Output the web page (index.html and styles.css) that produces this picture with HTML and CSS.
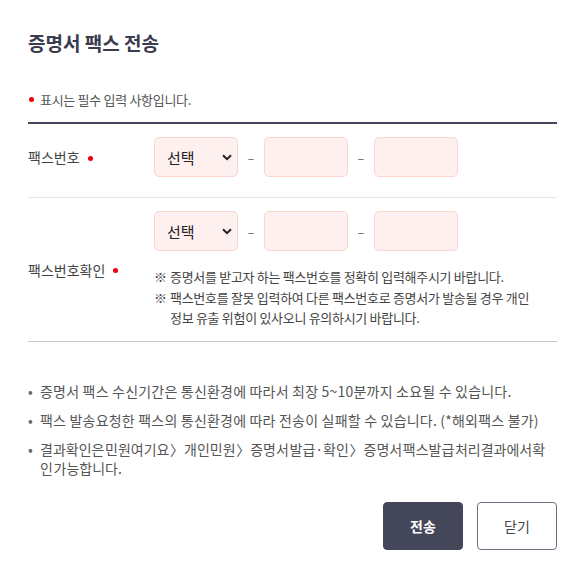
FILE: index.html
```html
<!DOCTYPE html>
<html>
<head>
  <title>증명서 팩스 전송</title>
  <link rel="stylesheet" href="styles.css">
</head>
<body>
  <div class="popup">
    <h2 class="title">증명서 팩스 전송</h2>
    <p class="req-note"><span class="dot"></span>표시는 필수 입력 사항입니다.</p>

    <div class="form-table">
      <div class="row">
        <div class="label">팩스번호<span class="dot"></span></div>
        <div class="field">
          <div class="fax-line">
            <div class="select-box">
              <select><option>선택</option></select>
              <svg class="chev" width="10" height="7" viewBox="0 0 10 7"><path d="M1 1.2 5 5.2 9 1.2" fill="none" stroke="#222" stroke-width="2"/></svg>
            </div>
            <span class="dash">–</span>
            <input type="text" class="num">
            <span class="dash">–</span>
            <input type="text" class="num">
          </div>
        </div>
      </div>

      <div class="row last">
        <div class="label">팩스번호확인<span class="dot"></span></div>
        <div class="field">
          <div class="fax-line">
            <div class="select-box">
              <select><option>선택</option></select>
              <svg class="chev" width="10" height="7" viewBox="0 0 10 7"><path d="M1 1.2 5 5.2 9 1.2" fill="none" stroke="#222" stroke-width="2"/></svg>
            </div>
            <span class="dash">–</span>
            <input type="text" class="num">
            <span class="dash">–</span>
            <input type="text" class="num">
          </div>
          <ul class="notes">
            <li>증명서를 받고자 하는 팩스번호를 정확히 입력해주시기 바랍니다.</li>
            <li>팩스번호를 잘못 입력하여 다른 팩스번호로 증명서가 발송될 경우 개인 정보 유출 위험이 있사오니 유의하시기 바랍니다.</li>
          </ul>
        </div>
      </div>
    </div>

    <ul class="info">
      <li>증명서 팩스 수신기간은 통신환경에 따라서 최장 5~10분까지 소요될 수 있습니다.</li>
      <li>팩스 발송요청한 팩스의 통신환경에 따라 전송이 실패할 수 있습니다. (*해외팩스 불가)</li>
      <li class="path">결과확인은 민원여기요 〉개인민원 〉증명서 발급·확인 〉증명서 팩스발급 처리결과에서확인 가능합니다.</li>
    </ul>

    <div class="buttons">
      <button type="button" class="btn primary">전송</button>
      <button type="button" class="btn">닫기</button>
    </div>
  </div>
</body>
</html>
```

FILE: styles.css
```css
body {
  margin: 0;
  background-color: #fff;
  font-family: "Noto Sans CJK KR", "Noto Sans", sans-serif;
  color: #444;
}
.popup {
  padding: 28px 17px 0 28px;
}
.title {
  margin: 0;
  font-size: 19px;
  font-weight: bold;
  line-height: 30px;
  color: #3a3c4d;
}
.dot {
  display: inline-block;
  width: 5px;
  height: 5px;
  border-radius: 50%;
  background-color: #e8000b;
  vertical-align: middle;
}
.req-note {
  margin: 33px 0 0;
  font-size: 13px;
  line-height: 18px;
  color: #555;
  letter-spacing: -0.3px;
}
.req-note .dot {
  margin: 0 6px 3px 1px;
}
.form-table {
  margin-top: 13px;
  border-top: 2px solid #44465a;
  border-bottom: 1px solid #c8c8cc;
}
.row {
  display: flex;
  align-items: center;
  border-bottom: 1px solid #e6e6e6;
  padding: 13px 0 20px;
}
.row.last {
  border-bottom: none;
  padding-bottom: 12px;
}
.label {
  flex-shrink: 0;
  width: 126px;
  font-size: 14px;
  color: #444;
}
.label .dot {
  margin: 0 0 2px 8px;
}
.field {
  flex: 1;
}
.fax-line {
  display: flex;
  align-items: center;
}
.select-box {
  position: relative;
  width: 84px;
  height: 40px;
}
.select-box select {
  appearance: none;
  -webkit-appearance: none;
  width: 100%;
  height: 100%;
  box-sizing: border-box;
  padding: 0 0 0 12px;
  border: 1px solid #fbd5cf;
  border-radius: 5px;
  background-color: #fff0f0;
  font-family: inherit;
  font-size: 15px;
  color: #222;
}
.chev {
  position: absolute;
  right: 6px;
  top: 17px;
  pointer-events: none;
}
.num {
  width: 84px;
  height: 40px;
  box-sizing: border-box;
  border: 1px solid #fbd5cf;
  border-radius: 5px;
  background-color: #fff0f0;
}
.dash {
  width: 26px;
  text-align: center;
  font-size: 12px;
  color: #555;
}
.notes {
  list-style: none;
  margin: 16px 0 0;
  padding: 0 20px 0 0;
  font-size: 13px;
  line-height: 20.5px;
  color: #444;
  letter-spacing: -0.3px;
}
.notes li {
  padding-left: 16px;
  text-indent: -16px;
}
.notes li::before {
  content: "※";
  display: inline-block;
  width: 16px;
  text-indent: 0;
}
.info {
  list-style: none;
  margin: 40px 0 0;
  padding: 0;
  font-size: 14px;
  line-height: 19px;
  color: #555;
  letter-spacing: 0.2px;
  line-break: anywhere;
}
.info li {
  position: relative;
  padding-left: 12px;
  margin-bottom: 10px;
}
.info li::before {
  content: "•";
  position: absolute;
  left: 0;
  color: #666;
}
.info li.path {
  letter-spacing: 0;
  word-spacing: -2.5px;
}
.buttons {
  display: flex;
  justify-content: flex-end;
  gap: 14px;
  margin-top: 24px;
}
.btn {
  width: 80px;
  height: 48px;
  border: 1px solid #6d7080;
  border-radius: 4px;
  background-color: #fff;
  font-family: inherit;
  font-size: 14px;
  color: #444;
  cursor: pointer;
}
.btn.primary {
  background-color: #44465a;
  border-color: #44465a;
  color: #fff;
  font-weight: bold;
}
```
